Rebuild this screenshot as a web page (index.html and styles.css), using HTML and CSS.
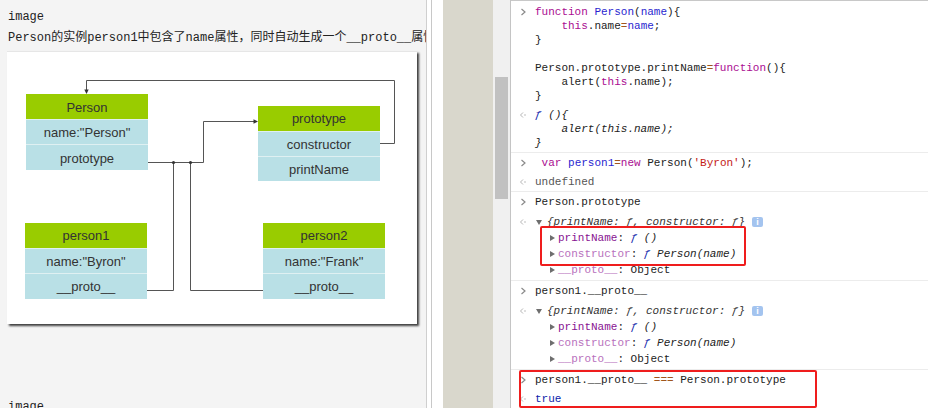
FILE: index.html
```html
<!DOCTYPE html>
<html lang="zh">
<head>
<meta charset="utf-8">
<title>Person prototype</title>
<link rel="stylesheet" href="styles.css">
</head>
<body>
<div class="page">
  <div class="article">
    <p class="line">image</p>
    <p class="line clip">Person的实例person1中包含了name属性，同时自动生成一个__proto__属性</p>
    <div class="figure">
      <svg class="diagram" width="410" height="273" viewBox="7 51 410 273" xmlns="http://www.w3.org/2000/svg">
        <rect x="7" y="51" width="410" height="273" fill="#fff"/>
        <line x1="7" y1="51.5" x2="417" y2="51.5" stroke="#e6e6e6" stroke-width="1"/>
        <g fill="none" stroke="#555" stroke-width="1">
          <path d="M380 143.5 H394.5 V80.5 H86.5 V90"/>
          <path d="M148 162.5 H203.5 V121.5 H254"/>
          <path d="M173.5 162.5 V290.5 H147"/>
          <path d="M190.5 162.5 V290.5 H263"/>
        </g>
        <g fill="#333">
          <polygon points="84.3,89.5 88.7,89.5 86.5,94"/>
          <polygon points="253.5,119.3 253.5,123.7 258,121.5"/>
          <circle cx="173.5" cy="162.5" r="1.6"/>
          <circle cx="190.5" cy="162.5" r="1.6"/>
        </g>
        <g class="box">
          <rect x="26" y="94" width="122" height="76" fill="#dff0f2"/>
          <rect x="26" y="94" width="122" height="25" fill="#99cc00"/>
          <rect x="26" y="120" width="122" height="24" fill="#b9e0e6"/>
          <rect x="26" y="145" width="122" height="25" fill="#b9e0e6"/>
          <text x="87" y="111.5">Person</text>
          <text x="87" y="137">name:"Person"</text>
          <text x="87" y="162.5">prototype</text>
        </g>
        <g class="box">
          <rect x="258" y="106" width="122" height="75" fill="#dff0f2"/>
          <rect x="258" y="106" width="122" height="25" fill="#99cc00"/>
          <rect x="258" y="132" width="122" height="24" fill="#b9e0e6"/>
          <rect x="258" y="157" width="122" height="24" fill="#b9e0e6"/>
          <text x="319" y="123">prototype</text>
          <text x="319" y="148.5">constructor</text>
          <text x="319" y="173.5">printName</text>
        </g>
        <g class="box">
          <rect x="25" y="223" width="122" height="76" fill="#dff0f2"/>
          <rect x="25" y="223" width="122" height="25" fill="#99cc00"/>
          <rect x="25" y="249" width="122" height="24" fill="#b9e0e6"/>
          <rect x="25" y="274" width="122" height="25" fill="#b9e0e6"/>
          <text x="86" y="240">person1</text>
          <text x="86" y="265.5">name:"Byron"</text>
          <text x="86" y="291">__proto__</text>
        </g>
        <g class="box">
          <rect x="263" y="223" width="122" height="76" fill="#dff0f2"/>
          <rect x="263" y="223" width="122" height="25" fill="#99cc00"/>
          <rect x="263" y="249" width="122" height="24" fill="#b9e0e6"/>
          <rect x="263" y="274" width="122" height="25" fill="#b9e0e6"/>
          <text x="324" y="240">person2</text>
          <text x="324" y="265.5">name:"Frank"</text>
          <text x="324" y="291">__proto__</text>
        </g>
      </svg>
    </div>
    <p class="line lower">image</p>
  </div>
  <div class="split"></div>
  <div class="blank"></div>
  <div class="beige"></div>
  <div class="scroll"><div class="thumb"></div></div>

  <div class="console">
    <div class="group">
      <div class="msg">
        <div class="ico"><svg class="prompt" width="7" height="8" viewBox="0 0 7 8"><path d="M1.5 1 L5 4 L1.5 7" fill="none" stroke="#8a8a8a" stroke-width="1.2"/></svg></div>
        <div class="code"><span class="kw">function</span> <span class="def">Person</span>(<span class="def">name</span>){
    <span class="kw">this</span>.name<span class="op">=</span><span class="def">name</span>;
}

Person.prototype.printName<span class="op">=</span><span class="kw">function</span>(){
    alert(<span class="kw">this</span>.name);
}</div>
      </div>
      <div class="msg">
        <div class="ico"><svg class="result" width="8" height="8" viewBox="0 0 8 8"><path d="M4 1.5 L1.5 4 L4 6.5" fill="none" stroke="#b5b5b5" stroke-width="1"/><circle cx="6" cy="4" r="0.8" fill="#b5b5b5"/></svg></div>
        <div class="code ital"><span class="fn">ƒ</span> (){
    alert(this.name);
}</div>
      </div>
    </div>

    <div class="group">
      <div class="msg">
        <div class="ico"><svg class="prompt" width="7" height="8" viewBox="0 0 7 8"><path d="M1.5 1 L5 4 L1.5 7" fill="none" stroke="#8a8a8a" stroke-width="1.2"/></svg></div>
        <div class="code"> <span class="kw">var</span> <span class="def">person1</span><span class="op">=</span><span class="kw">new</span> Person(<span class="str">'Byron'</span>);</div>
      </div>
      <div class="msg">
        <div class="ico"><svg class="result" width="8" height="8" viewBox="0 0 8 8"><path d="M4 1.5 L1.5 4 L4 6.5" fill="none" stroke="#b5b5b5" stroke-width="1"/><circle cx="6" cy="4" r="0.8" fill="#b5b5b5"/></svg></div>
        <div class="code undef">undefined</div>
      </div>
    </div>

    <div class="group">
      <div class="msg">
        <div class="ico"><svg class="prompt" width="7" height="8" viewBox="0 0 7 8"><path d="M1.5 1 L5 4 L1.5 7" fill="none" stroke="#8a8a8a" stroke-width="1.2"/></svg></div>
        <div class="code">Person.prototype</div>
      </div>
      <div class="msg tree-msg">
        <div class="ico"><svg class="result" width="8" height="8" viewBox="0 0 8 8"><path d="M4 1.5 L1.5 4 L4 6.5" fill="none" stroke="#b5b5b5" stroke-width="1"/><circle cx="6" cy="4" r="0.8" fill="#b5b5b5"/></svg></div>
        <div class="tree">
          <div class="tree-head"><span class="tri down"></span><span class="ital preview">{printName: ƒ, constructor: ƒ}</span><span class="info">i</span></div>
          <div class="tree-row"><span class="tri right"></span><span class="prop">printName</span>: <span class="fn ital">ƒ</span> <span class="ital">()</span></div>
          <div class="tree-row"><span class="tri right"></span><span class="prop dim">constructor</span>: <span class="fn ital">ƒ</span> <span class="ital">Person(name)</span></div>
          <div class="tree-row"><span class="tri right"></span><span class="prop dim">__proto__</span>: Object</div>
        </div>
      </div>
    </div>

    <div class="group">
      <div class="msg">
        <div class="ico"><svg class="prompt" width="7" height="8" viewBox="0 0 7 8"><path d="M1.5 1 L5 4 L1.5 7" fill="none" stroke="#8a8a8a" stroke-width="1.2"/></svg></div>
        <div class="code">person1.__proto__</div>
      </div>
      <div class="msg tree-msg">
        <div class="ico"><svg class="result" width="8" height="8" viewBox="0 0 8 8"><path d="M4 1.5 L1.5 4 L4 6.5" fill="none" stroke="#b5b5b5" stroke-width="1"/><circle cx="6" cy="4" r="0.8" fill="#b5b5b5"/></svg></div>
        <div class="tree">
          <div class="tree-head"><span class="tri down"></span><span class="ital preview">{printName: ƒ, constructor: ƒ}</span><span class="info">i</span></div>
          <div class="tree-row"><span class="tri right"></span><span class="prop">printName</span>: <span class="fn ital">ƒ</span> <span class="ital">()</span></div>
          <div class="tree-row"><span class="tri right"></span><span class="prop dim">constructor</span>: <span class="fn ital">ƒ</span> <span class="ital">Person(name)</span></div>
          <div class="tree-row"><span class="tri right"></span><span class="prop dim">__proto__</span>: Object</div>
        </div>
      </div>
    </div>

    <div class="group last">
      <div class="msg">
        <div class="ico"><svg class="prompt" width="7" height="8" viewBox="0 0 7 8"><path d="M1.5 1 L5 4 L1.5 7" fill="none" stroke="#8a8a8a" stroke-width="1.2"/></svg></div>
        <div class="code">person1.__proto__ <span class="op">===</span> Person.prototype</div>
      </div>
      <div class="msg">
        <div class="ico"><svg class="result" width="8" height="8" viewBox="0 0 8 8"><path d="M4 1.5 L1.5 4 L4 6.5" fill="none" stroke="#b5b5b5" stroke-width="1"/><circle cx="6" cy="4" r="0.8" fill="#b5b5b5"/></svg></div>
        <div class="code bool">true</div>
      </div>
    </div>

    <div class="mark mark-one"></div>
    <div class="mark mark-two"></div>
  </div>
</div>
</body>
</html>
```

FILE: styles.css
```css
* { box-sizing: border-box; }
html, body { margin: 0; padding: 0; }
body {
  width: 928px;
  height: 408px;
  overflow: hidden;
  background: #fff;
}
.page {
  display: flex;
  height: 408px;
  overflow: hidden;
}

/* left article */
.article {
  width: 427px;
  flex: none;
  background: #f4f4f4;
  border-right: 1px solid #cfcfcf;
  padding: 7px 0 0 8px;
  overflow: hidden;
  font-family: "Liberation Mono", "Noto Sans CJK SC", monospace;
  font-size: 12px;
  color: #222;
}
.line {
  margin: 0;
  line-height: 21px;
  white-space: nowrap;
}
.clip { overflow: hidden; }
.figure {
  margin: 2px 0 0 -1px;
  width: 410px;
  height: 273px;
  background: #fff;
  box-shadow: 2px 2px 2px #3f3f3f;
}
.diagram { display: block; }
.diagram text {
  font-family: "Liberation Sans", Arial, sans-serif;
  font-size: 13px;
  fill: #333;
  text-anchor: middle;
}
.lower { margin-top: 73px; }

/* middle strips */
.split {
  width: 5px;
  flex: none;
  background: #fff;
  border-right: 1px solid #c8c8c8;
}
.blank { width: 11px; flex: none; background: #fff; }
.beige { width: 50px; flex: none; background: #d9d7cc; }
.scroll {
  width: 18px;
  flex: none;
  background: #f0f0f0;
  border-right: 1px solid #c4c4c4;
  padding: 77px 0 0 2px;
}
.thumb { width: 13px; height: 122px; background: #c1c1c1; }

/* console */
.console {
  position: relative;
  flex: 1;
  border-top: 1px solid #c8c8c8;
  padding-top: 1px;
  font-family: "Liberation Mono", monospace;
  font-size: 11px;
  color: #222;
  overflow: hidden;
}
.group { border-bottom: 1px solid #ececec; }
.group.last { border-bottom: none; }
.msg {
  display: flex;
  padding: 3px 0 2px 0;
  line-height: 14px;
}
.ico {
  width: 24px;
  flex: none;
  height: 14px;
  position: relative;
}
.tree-msg .ico { height: 16px; }
.prompt { position: absolute; left: 9px; top: 3px; }
.result { position: absolute; left: 8px; top: 3px; }
.tree-msg .result { top: 4px; }
.code { white-space: pre; }
.ital { font-style: italic; }
.kw { color: #aa0d91; }
.def { color: #2a1fcf; }
.op { color: #a0561c; }
.str { color: #c41a16; }
.fn { color: #0d22aa; font-style: italic; }
.undef { color: #555; }
.bool { color: #0d22aa; }

.tree { line-height: 16px; }
.tree-head, .tree-row {
  display: block;
  white-space: pre;
  height: 16px;
}
.tree-row { padding-left: 13px; }
.preview { color: #333; }
.tri {
  display: inline-block;
  vertical-align: top;
  width: 10px;
  height: 16px;
  position: relative;
}
.tri.right::before {
  content: "";
  position: absolute;
  left: 2px;
  top: 4.5px;
  border-left: 5px solid #6e6e6e;
  border-top: 3.5px solid transparent;
  border-bottom: 3.5px solid transparent;
}
.tri.down { width: 12px; }
.tri.down::before {
  content: "";
  position: absolute;
  left: 1px;
  top: 6px;
  border-top: 5px solid #6e6e6e;
  border-left: 3.5px solid transparent;
  border-right: 3.5px solid transparent;
}
.prop { color: #881391; }
.prop.dim { color: #b871bd; }
.info {
  display: inline-block;
  vertical-align: top;
  margin: 3px 0 0 7px;
  width: 11px;
  height: 10px;
  line-height: 10px;
  border-radius: 2px;
  background: #a4c4ef;
  color: #fff;
  font-family: "Liberation Sans", sans-serif;
  font-size: 9px;
  font-weight: bold;
  font-style: normal;
  text-align: center;
}

.mark {
  position: absolute;
  border: 2px solid #ef1d1d;
  border-radius: 2px;
}
.mark-one { left: 29px; top: 225px; width: 206px; height: 40px; }
.mark-two { left: 8px; top: 369px; width: 298px; height: 38px; }
```
